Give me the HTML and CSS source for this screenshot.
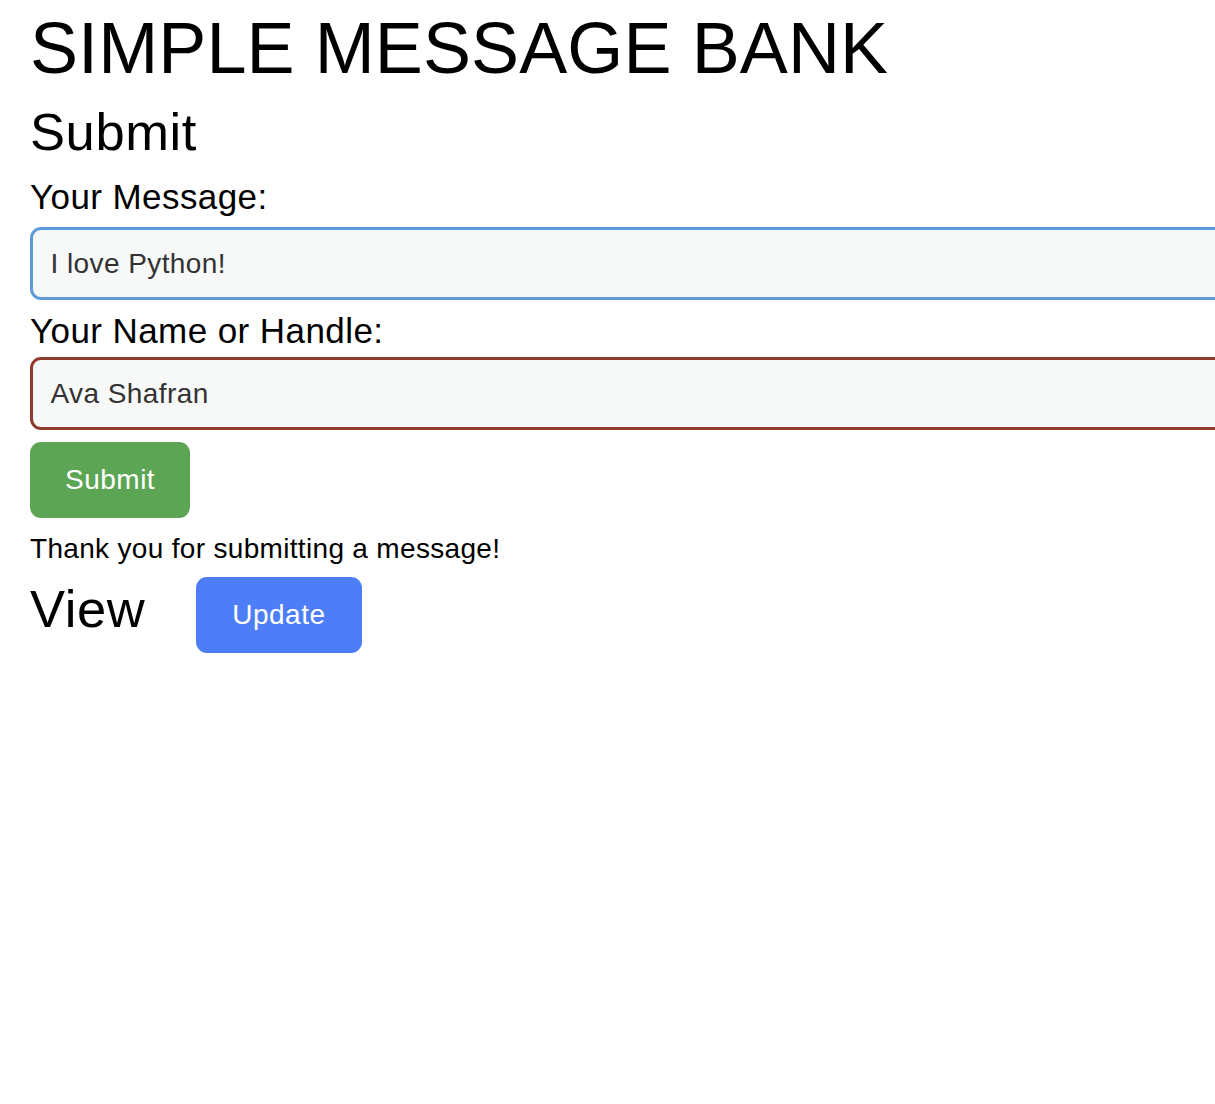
FILE: index.html
```html
<!DOCTYPE html>
<html lang="en">
<head>
<meta charset="utf-8">
<title>Simple Message Bank</title>
<link rel="stylesheet" href="styles.css">
</head>
<body>
<div class="page">
  <h1 class="title">SIMPLE MESSAGE BANK</h1>
  <h2 class="section-title">Submit</h2>
  <form class="form">
    <label class="label label-first" for="message">Your Message:</label>
    <input class="field field-message" id="message" type="text" value="I love Python!">
    <label class="label label-second" for="handle">Your Name or Handle:</label>
    <input class="field field-handle" id="handle" type="text" value="Ava Shafran">
    <div class="actions">
      <button class="btn btn-submit" type="button">Submit</button>
    </div>
  </form>
  <p class="thanks">Thank you for submitting a message!</p>
  <div class="view-row">
    <h2 class="section-title view-title">View</h2>
    <button class="btn btn-update" type="button">Update</button>
  </div>
</div>
</body>
</html>
```

FILE: styles.css
```css
html, body {
  margin: 0;
  padding: 0;
  overflow-x: hidden;
  background: #ffffff;
}

body {
  font-family: "Liberation Sans", Arial, sans-serif;
  color: #000000;
}

.page {
  padding-left: 30px;
  display: flex;
  flex-direction: column;
  align-items: flex-start;
}

.title {
  margin: 7px 0 0;
  font-size: 72px;
  line-height: 82px;
  font-weight: 400;
  letter-spacing: 0.1px;
}

.section-title {
  margin: 13px 0 0;
  font-size: 52.5px;
  line-height: 60px;
  font-weight: 400;
  letter-spacing: 0.6px;
}

.form {
  display: flex;
  flex-direction: column;
  align-items: flex-start;
  margin: 0;
}

.label {
  font-size: 35px;
  line-height: 40px;
  letter-spacing: 0.42px;
}

.label-first {
  margin-top: 15px;
}

.label-second {
  margin-top: 11px;
}

.field {
  box-sizing: border-box;
  width: 1260px;
  height: 73px;
  margin-top: 10px;
  padding: 17.5px;
  border: 3px solid #5f99d8;
  border-radius: 11px;
  background: #f7f8f8;
  font-family: "Liberation Sans", Arial, sans-serif;
  font-size: 28px;
  line-height: 32px;
  letter-spacing: 0.42px;
  color: #333333;
  outline: none;
}

.field-handle {
  margin-top: 6px;
  border-color: #8e3b2e;
}

.actions {
  margin-top: 12px;
}

.btn {
  display: block;
  border: none;
  border-radius: 11px;
  padding: 22px 36px;
  font-family: "Liberation Sans", Arial, sans-serif;
  font-size: 28px;
  line-height: 32px;
  letter-spacing: 0.5px;
  color: #ffffff;
  cursor: pointer;
}

.btn-submit {
  background: #5ca554;
  padding-left: 35px;
  padding-right: 35px;
}

.btn-update {
  background: #4d7ef7;
  padding-left: 36px;
  padding-right: 36px;
}

.thanks {
  margin: 15px 0 0;
  font-size: 28px;
  line-height: 32px;
  letter-spacing: 0.32px;
}

.view-row {
  display: flex;
  align-items: flex-start;
  gap: 51px;
  margin-top: 12px;
}

.view-title {
  margin: 2px 0 0;
}
```
